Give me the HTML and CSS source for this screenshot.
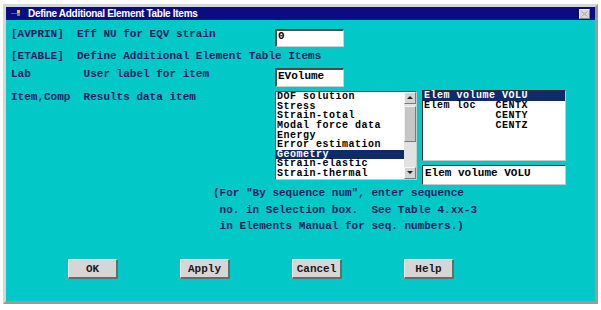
FILE: index.html
```html
<!DOCTYPE html>
<html lang="en">
<head>
    <meta charset="UTF-8">
    <title>Define Additional Element Table Items</title>
    <link rel="stylesheet" href="styles.css">
</head>
<body>

    <div class="window">
        <div class="titlebar">
            <svg class="app-icon" width="10" height="9" viewBox="0 0 10 9">
                <rect x="0" y="4" width="6" height="1" fill="#e03020"/>
                <rect x="6" y="1" width="3" height="3" fill="#f0c020"/>
                <rect x="6" y="4" width="3" height="3" fill="#30b040"/>
            </svg>
            <span class="title">Define Additional Element Table Items</span>
            <span class="close">
                <svg width="7" height="6" viewBox="0 0 7 6">
                    <path d="M0.5 0.5 L6.5 5.5 M6.5 0.5 L0.5 5.5" stroke="#a8a8a8" stroke-width="1"/>
                </svg>
            </span>
        </div>

        <div class="dialog">
            <div class="row row-avprin">
                <div class="label">[AVPRIN]  Eff NU for EQV strain</div>
                <div class="field field-short">0</div>
            </div>

            <div class="row row-etable">
                <div class="label label-wide">[ETABLE]  Define Additional Element Table Items</div>
            </div>

            <div class="row row-lab">
                <div class="label">Lab        User label for item</div>
                <div class="field field-lab">EVolume</div>
            </div>

            <div class="row row-item">
                <div class="label label-item">Item,Comp  Results data item</div>

                <div class="listbox">
                    <div class="list-items">
                        <div class="item">DOF solution</div>
                        <div class="item">Stress</div>
                        <div class="item">Strain-total</div>
                        <div class="item">Modal force data</div>
                        <div class="item">Energy</div>
                        <div class="item">Error estimation</div>
                        <div class="item selected">Geometry</div>
                        <div class="item">Strain-elastic</div>
                        <div class="item">Strain-thermal</div>
                    </div>
                    <div class="scrollbar">
                        <div class="arrow arrow-up"></div>
                        <div class="track">
                            <div class="thumb"></div>
                        </div>
                        <div class="arrow arrow-down"></div>
                    </div>
                </div>

                <div class="side">
                    <div class="comp-list">
                        <div class="comp selected">Elem volume VOLU</div>
                        <div class="comp">Elem loc   CENTX</div>
                        <div class="comp">           CENTY</div>
                        <div class="comp">           CENTZ</div>
                    </div>
                    <div class="selection">Elem volume VOLU</div>
                </div>
            </div>

            <div class="note">(For "By sequence num", enter sequence
 no. in Selection box.  See Table 4.xx-3
 in Elements Manual for seq. numbers.)</div>

            <div class="buttons">
                <button class="btn">OK</button>
                <button class="btn">Apply</button>
                <button class="btn">Cancel</button>
                <button class="btn">Help</button>
            </div>
        </div>
    </div>

</body>
</html>
```

FILE: styles.css
```css
body {
    margin: 0;
    padding: 0;
    background-color: #ffffff;
    font-family: "Liberation Mono", monospace;
}

.window {
    margin: 4px 0 0 3px;
    width: 595px;
    box-sizing: border-box;
    border: 3px solid #d6d6d6;
    border-right-color: #9a9a9a;
    border-bottom-color: #9a9a9a;
}

.titlebar {
    display: flex;
    align-items: center;
    height: 13px;
    background-color: #0c0c82;
    color: white;
}
.app-icon {
    margin-left: 5px;
    margin-right: 7px;
}
.title {
    font-family: "Liberation Sans", Arial, sans-serif;
    font-weight: bold;
    font-size: 10px;
    letter-spacing: -0.3px;
    line-height: 13px;
}
.close {
    display: flex;
    align-items: center;
    justify-content: center;
    margin-left: auto;
    margin-right: 5px;
    width: 11px;
    height: 10px;
    box-sizing: border-box;
    background-color: #d8d8d8;
    border: 1px solid #f4f4f4;
    border-right-color: #808080;
    border-bottom-color: #808080;
}

.dialog {
    height: 281px;
    box-sizing: border-box;
    padding: 8px 0 0 5px;
    background-color: #03c8c8;
    color: #1b1d5e;
    font-size: 11px;
    font-weight: bold;
}

.row {
    display: flex;
    align-items: flex-start;
}
.row-etable {
    margin-top: 3px;
}
.row-lab {
    margin-top: 6px;
}
.row-item {
    margin-top: 3px;
}

.label {
    width: 264px;
    flex-shrink: 0;
    line-height: 12px;
    white-space: pre;
}
.label-wide {
    width: auto;
}
.label-item {
    margin-top: 1px;
}

.field {
    width: 69px;
    box-sizing: border-box;
    padding-left: 1px;
    background-color: #ffffff;
    color: #000000;
    border: 2px solid #4a4a4a;
    border-right: 1px solid #d0d0d0;
    border-bottom: 1px solid #d0d0d0;
    line-height: 11px;
}
.field-short {
    margin-top: 1px;
    height: 18px;
}
.field-lab {
    height: 19px;
    padding-top: 1px;
}

.listbox {
    display: flex;
    margin-top: 1px;
    width: 142px;
    height: 89px;
    box-sizing: border-box;
    background-color: #ffffff;
    color: #000000;
    border: 1px solid #505050;
    border-right-color: #c8c8c8;
    border-bottom-color: #c8c8c8;
}
.list-items {
    flex: 1;
    overflow: hidden;
}
.item {
    padding-left: 1px;
    height: 9.65px;
    font-size: 10px;
    letter-spacing: 0.5px;
    line-height: 9.65px;
    white-space: pre;
}
.selected {
    background-color: #0e2c6a;
    color: #ffffff;
}

.scrollbar {
    display: flex;
    flex-direction: column;
    width: 12px;
    background-color: #e2e2e2;
}
.arrow {
    position: relative;
    height: 12px;
    box-sizing: border-box;
    background-color: #d4d4d4;
    border: 1px solid #f6f6f6;
    border-right-color: #7a7a7a;
    border-bottom-color: #7a7a7a;
}
.arrow::after {
    content: "";
    position: absolute;
    left: 2px;
    top: 3px;
    border-left: 3px solid transparent;
    border-right: 3px solid transparent;
}
.arrow-up::after {
    border-bottom: 3px solid #202020;
}
.arrow-down::after {
    border-top: 3px solid #202020;
}
.track {
    flex: 1;
    padding-top: 2px;
}
.thumb {
    height: 36px;
    box-sizing: border-box;
    background-color: #c6c6c6;
    border: 1px solid #f0f0f0;
    border-right-color: #7a7a7a;
    border-bottom-color: #7a7a7a;
}

.side {
    display: flex;
    flex-direction: column;
    gap: 4px;
    margin-left: 5px;
    width: 144px;
}
.comp-list {
    height: 71px;
    box-sizing: border-box;
    background-color: #ffffff;
    color: #000000;
    border: 1px solid #303030;
    border-right-color: #c8c8c8;
    border-bottom-color: #c8c8c8;
}
.comp {
    padding-left: 1px;
    height: 10px;
    font-size: 10px;
    letter-spacing: 0.5px;
    line-height: 10px;
    white-space: pre;
}
.selection {
    height: 20px;
    box-sizing: border-box;
    padding: 1px 0 0 2px;
    background-color: #ffffff;
    color: #000000;
    border: 1px solid #303030;
    border-right-color: #c8c8c8;
    border-bottom-color: #c8c8c8;
    line-height: 12px;
}

.note {
    margin-left: 202px;
    line-height: 16.7px;
    white-space: pre;
}

.buttons {
    display: flex;
    gap: 62px;
    margin: 24px 0 0 57px;
}
.btn {
    width: 50px;
    height: 20px;
    padding: 0;
    box-sizing: border-box;
    background-color: #d6d6d6;
    color: #1a1a1a;
    font-family: "Liberation Mono", monospace;
    font-size: 11px;
    font-weight: bold;
    border: 1px solid #f6f6f6;
    border-right: 2px solid #6a6a6a;
    border-bottom: 2px solid #6a6a6a;
}
```
